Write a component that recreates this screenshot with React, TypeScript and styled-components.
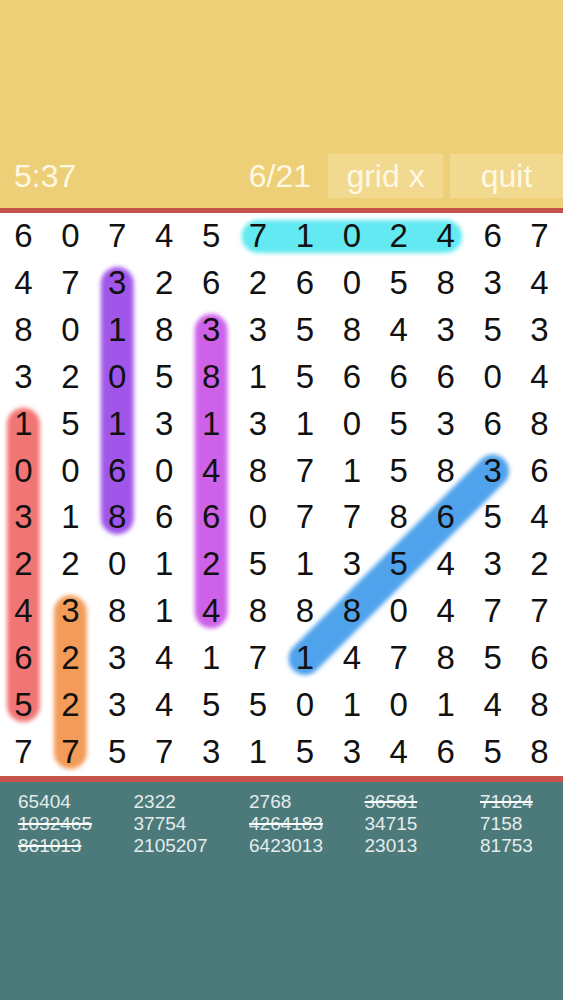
import React from "react";
import styled, { createGlobalStyle } from "styled-components";

const GlobalStyle = createGlobalStyle`
  html, body { margin: 0; padding: 0; }
  body { font-family: "Liberation Sans", Arial, sans-serif; background: #4c7a7b; overflow-x: hidden; }
  * { box-sizing: border-box; }
`;

const GRID: string[] = [
  "607457102467",
  "473262605834",
  "801833584353",
  "320581566604",
  "151313105368",
  "006048715836",
  "318660778654",
  "220125135432",
  "438148880477",
  "623417147856",
  "523455010148",
  "775731534658",
];

type Stroke = { from: [number, number]; to: [number, number]; color: string };

const STROKES: Stroke[] = [
  { from: [0, 5], to: [0, 9], color: "#62e9f2" },
  { from: [1, 2], to: [6, 2], color: "#a056e9" },
  { from: [2, 4], to: [8, 4], color: "#cd62e8" },
  { from: [4, 0], to: [10, 0], color: "#f27474" },
  { from: [8, 1], to: [11, 1], color: "#f39b58" },
  { from: [9, 6], to: [5, 10], color: "#4fa2ec" },
];

type Word = { text: string; found?: boolean };

const WORDS: Word[] = [
  { text: "65404" },
  { text: "2322" },
  { text: "2768" },
  { text: "36581", found: true },
  { text: "71024", found: true },
  { text: "1032465", found: true },
  { text: "37754" },
  { text: "4264183", found: true },
  { text: "34715" },
  { text: "7158" },
  { text: "861013", found: true },
  { text: "2105207" },
  { text: "6423013" },
  { text: "23013" },
  { text: "81753" },
];

const Page = styled.div`
  min-height: 100vh;
  display: flex;
  flex-direction: column;
  width: 563px;
`;

const Header = styled.header`
  height: 213px;
  background: #edcf77;
  display: flex;
  align-items: flex-end;
  padding: 0 0 10px 14px;
  border-bottom: 5px solid #c5534b;
`;

const HeaderText = styled.span`
  font-size: 32px;
  line-height: 44px;
  color: #fff8e4;
`;

const Timer = styled(HeaderText)`
  flex: 1;
`;

const Progress = styled(HeaderText)`
  margin-right: 17px;
`;

const HeaderButton = styled.button<{ $width: number; $gap: number }>`
  width: ${(p) => p.$width}px;
  height: 44px;
  border: none;
  padding: 0;
  margin-left: ${(p) => p.$gap}px;
  background: #f1d98f;
  color: #fff8e4;
  font-family: "Liberation Sans", Arial, sans-serif;
  font-size: 32px;
  line-height: 44px;
  text-align: center;
`;

const Board = styled.div`
  position: relative;
  width: 563px;
  height: 563px;
  background: #ffffff;
`;

const Overlay = styled.svg`
  position: absolute;
  inset: 0;
  width: 100%;
  height: 100%;
`;

const Cells = styled.div`
  position: relative;
  display: grid;
  grid-template-columns: repeat(12, 1fr);
  grid-template-rows: repeat(12, 1fr);
  width: 100%;
  height: 100%;
`;

const Cell = styled.div`
  display: flex;
  align-items: center;
  justify-content: center;
  font-size: 33px;
  color: #111111;
  padding-bottom: 1px;
`;

const Footer = styled.footer`
  flex: 1;
  background: #4c7a7b;
  border-top: 6px solid #c5534b;
  padding: 9px 0 0 18px;
`;

const WordList = styled.div`
  display: grid;
  grid-template-columns: repeat(4, 115.5px) 1fr;
`;

const WordItem = styled.span<{ $found?: boolean }>`
  font-size: 19px;
  line-height: 22px;
  color: #e4ecec;
  text-decoration: ${(p) => (p.$found ? "line-through" : "none")};
  text-decoration-thickness: 2px;
  text-decoration-color: #ffffff;
`;

export default function App() {
  return (
    <Page>
      <GlobalStyle />
      <Header>
        <Timer>5:37</Timer>
        <Progress>6/21</Progress>
        <HeaderButton $width={115} $gap={0}>grid x</HeaderButton>
        <HeaderButton $width={113} $gap={7}>quit</HeaderButton>
      </Header>
      <Board>
        <Overlay viewBox="0 0 12 12" preserveAspectRatio="none">
          <defs>
            <filter id="soft" filterUnits="userSpaceOnUse" x="-1" y="-1" width="14" height="14">
              <feGaussianBlur stdDeviation="0.04" />
            </filter>
          </defs>
          <g filter="url(#soft)">
            {STROKES.map((s, i) => (
              <line
                key={i}
                x1={s.from[1] + 0.5}
                y1={s.from[0] + 0.5}
                x2={s.to[1] + 0.5}
                y2={s.to[0] + 0.5}
                stroke={s.color}
                strokeWidth={0.7}
                strokeLinecap="round"
              />
            ))}
          </g>
        </Overlay>
        <Cells>
          {GRID.flatMap((row, r) =>
            row.split("").map((d, c) => <Cell key={`${r}-${c}`}>{d}</Cell>)
          )}
        </Cells>
      </Board>
      <Footer>
        <WordList>
          {WORDS.map((w, i) => (
            <WordItem key={i} $found={w.found}>
              {w.text}
            </WordItem>
          ))}
        </WordList>
      </Footer>
    </Page>
  );
}
